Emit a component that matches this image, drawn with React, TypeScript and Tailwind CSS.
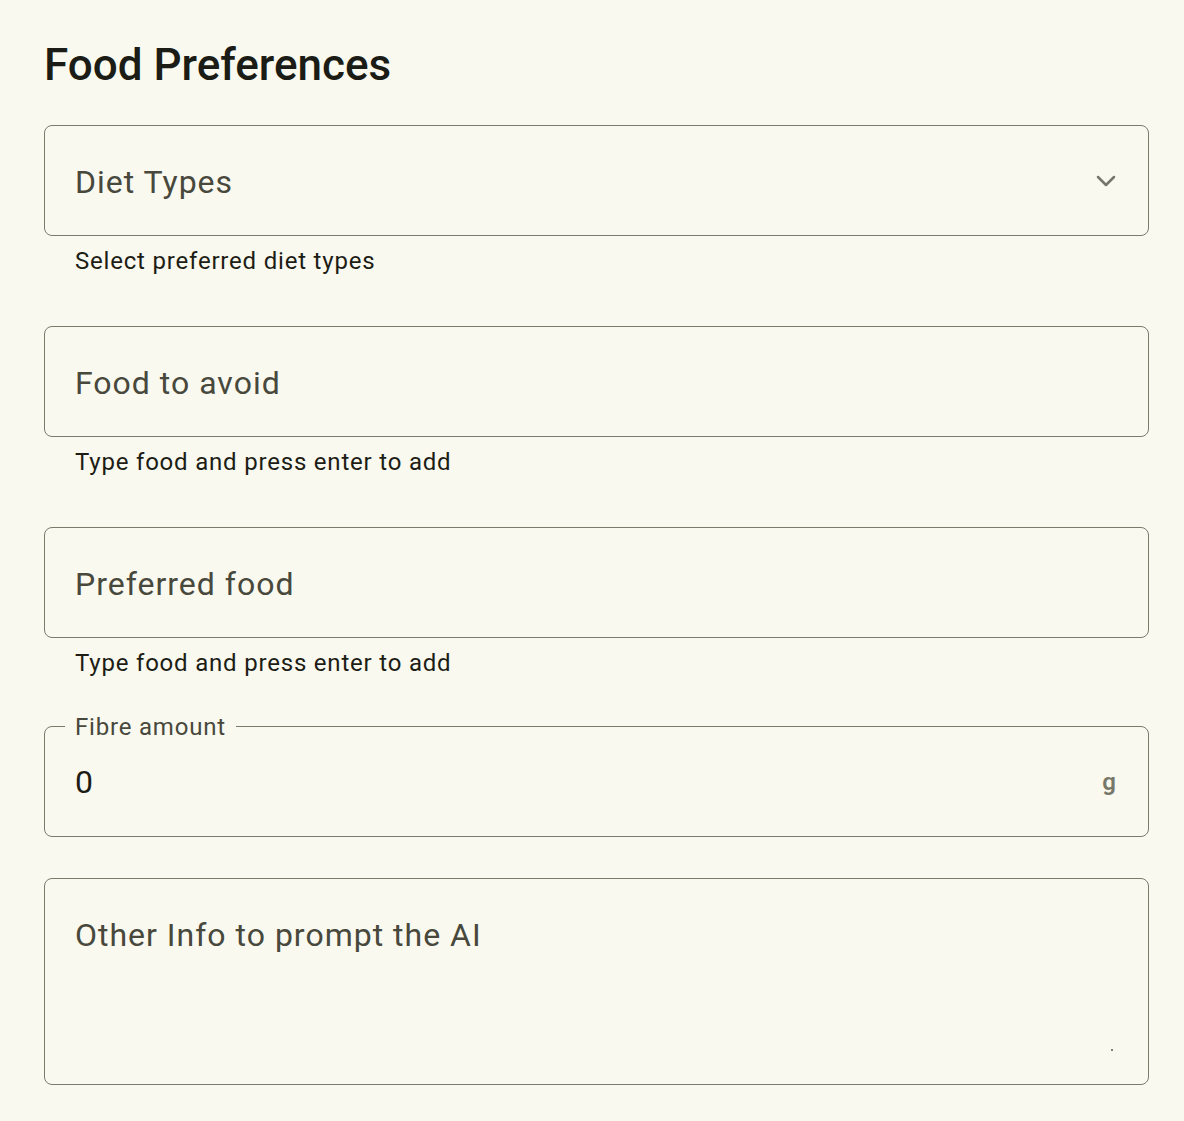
import React from 'react';

function Chevron() {
  return (
    <svg width="20" height="12" viewBox="0 0 20 12" fill="none">
      <polyline points="2,2 10,10 18,2" stroke="#76766a" strokeWidth="2.5" strokeLinecap="round" strokeLinejoin="round" />
    </svg>
  );
}

interface FieldProps {
  label: string;
  hint?: string;
  trailing?: React.ReactNode;
}

function OutlinedField({ label, hint, trailing }: FieldProps) {
  return (
    <div className="mb-[49px]">
      <div className="h-[111px] rounded-[8px] border-[1.5px] border-[#7b7b6c] flex items-center pl-[30px] pr-[32px]">
        <span className="flex-1 pt-[3px] text-[32px] leading-[48px] tracking-[1px] text-[#48483c]">{label}</span>
        {trailing}
      </div>
      {hint && (
        <div className="pt-[9px] pl-[31px] text-[24px] leading-[32px] tracking-[0.8px] text-[#1d1d16]">{hint}</div>
      )}
    </div>
  );
}

export default function App() {
  return (
    <div className="min-h-screen bg-[#f9f9ef] pt-[37px] pl-[44px] font-['Roboto',sans-serif]">
      <div className="w-[1105px]">
        <h2 className="text-[44px] leading-[56px] font-medium text-[#1b1c15] mb-[32px]">Food Preferences</h2>

        <OutlinedField label="Diet Types" hint="Select preferred diet types" trailing={<Chevron />} />
        <OutlinedField label="Food to avoid" hint="Type food and press enter to add" />
        <OutlinedField label="Preferred food" hint="Type food and press enter to add" />

        {/* Fibre amount – floated label */}
        <div className="relative mt-[-2px] mb-[41px]">
          <div className="h-[111px] rounded-[8px] border-[1.5px] border-[#7b7b6c] flex items-center pl-[30px] pr-[32px]">
            <span className="flex-1 text-[32px] leading-[48px] text-[#1d1d16]">0</span>
            <span className="text-[24px] font-semibold text-[#77776a]">g</span>
          </div>
          <span className="absolute left-[21px] top-[-15px] px-[10px] bg-[#f9f9ef] text-[24px] leading-[32px] tracking-[0.8px] text-[#48483c]">
            Fibre amount
          </span>
        </div>

        {/* Other info textarea */}
        <div className="h-[207px] rounded-[8px] border-[1.5px] border-[#7b7b6c] pt-[32px] pl-[30px] pr-[32px] pb-[32px] flex flex-col">
          <span className="text-[32px] leading-[48px] tracking-[1px] text-[#48483c]">Other Info to prompt the AI</span>
          <div className="flex-1 flex items-end justify-end pr-[3px] pb-[1px]">
            <span className="w-[2px] h-[2px] bg-[#555] rounded-full" />
          </div>
        </div>
      </div>
    </div>
  );
}
